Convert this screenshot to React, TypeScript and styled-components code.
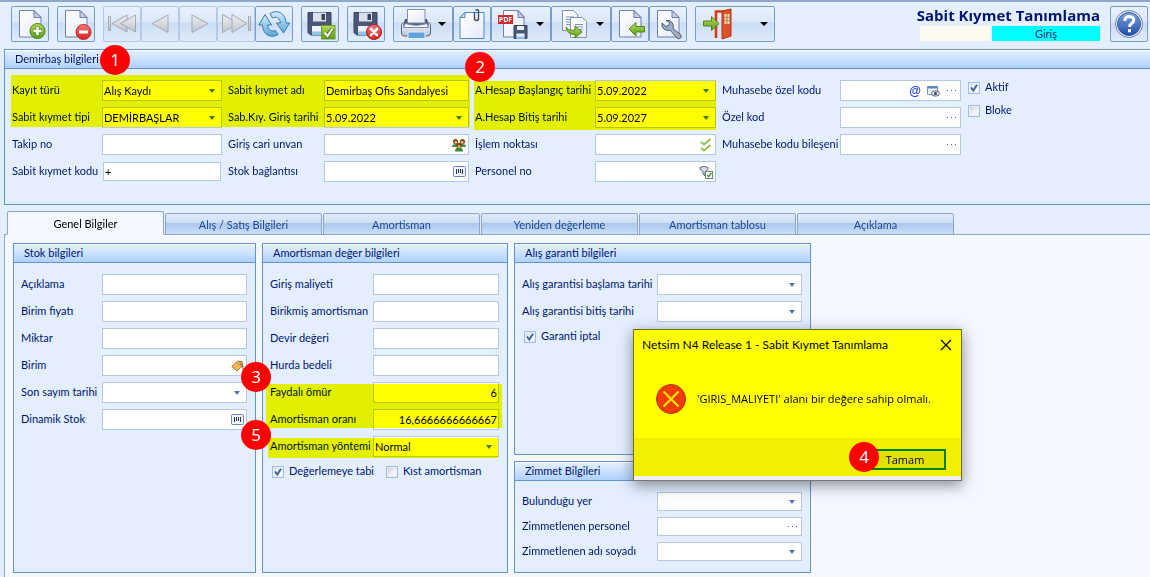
import React, { useId } from 'react';
import styled, { createGlobalStyle, css } from 'styled-components';

const c = {
  page: '#e3efff',
  tabPage: '#f3f7ff',
  line: '#6593cf',
  tabLine: '#8fa5cc',
  field: '#b3c8e3',
  text: '#00156e',
  mark: '#ffff00',
  red: '#ff0000',
};

const GlobalStyle = createGlobalStyle`
  * { box-sizing: border-box; }
  body { margin: 0; background: ${c.page}; overflow: hidden; }
  body, button, input, select { font-family: Lato, "Open Sans", sans-serif; font-size: 11px; line-height: 14px; }
`;

/* ---------- layout ---------- */

const Screen = styled.div`
  display: flex;
  flex-direction: column;
  min-height: 100vh;
  color: ${c.text};
  background: ${c.page};
`;

const Toolbar = styled.header`
  display: flex;
  align-items: flex-start;
  border-top: 2px solid #8fa8cb;
  padding: 4px 2px 7px 11px;
`;

const ToolGroup = styled.div`
  display: flex;
  margin-right: 8px;
`;

const ToolButton = styled.button<{ $wide?: number }>`
  display: flex;
  align-items: center;
  justify-content: ${(p) => (p.$wide ? 'space-between' : 'center')};
  width: ${(p) => p.$wide ?? 38}px;
  height: 36px;
  padding: 0 ${(p) => (p.$wide ? 6 : 0)}px;
  border: 1px solid #7b9ccb;
  border-radius: 2px;
  background: linear-gradient(#e8f1fd 0%, #dbe8fa 45%, #cadcf4 46%, #dfebfb 100%);
  &:disabled { border-color: #b4c9e6; }
`;

const TitleBlock = styled.div`
  display: flex;
  flex-direction: column;
  margin-left: auto;
  margin-right: 10px;
`;

const Title = styled.h1`
  margin: 0 0 2px;
  font: 700 15px/18px "Open Sans", sans-serif;
  text-align: right;
`;

const ModeBar = styled.div`
  display: grid;
  grid-template-columns: 70px 108px;
  gap: 2px;
  justify-content: end;
  text-align: center;
  color: #003060;
  line-height: 15px;
`;

const ModeCell = styled.span<{ $color: string }>`
  background: ${(p) => p.$color};
`;

const HeadPanel = styled.div`
  position: relative;
  & > section { margin-left: 4px; }
`;

const Group = styled.section<{ $open?: boolean }>`
  position: relative;
  min-width: 0;
  border: 1px solid ${c.line};
  ${(p) => p.$open && 'border-right: 0;'}
  background: ${c.page};
`;

const GroupTitle = styled.h2`
  margin: 0;
  padding: 1px 10px;
  height: 19px;
  border-bottom: 1px solid ${c.line};
  border-top: 1px solid #fff;
  font-size: 11px;
  line-height: 14px;
  font-weight: 400;
  background: linear-gradient(#e3efff, #afd2ff);
`;

const HeadForm = styled.div`
  display: flex;
  align-items: flex-start;
  gap: 6px;
  padding: 11px 7px 22px;
`;

const Fields = styled.div<{ $label: number; $field: number }>`
  display: grid;
  flex: none;
  grid-template-columns: ${(p) => p.$label}px ${(p) => p.$field}px;
  row-gap: 6px;
  align-items: center;
`;

const Columns = styled.div`
  display: grid;
  grid-template-columns: 243px 246px 297px;
  gap: 6px;
  align-items: stretch;
  padding: 8px;
`;

const Stack = styled.div`
  display: flex;
  flex-direction: column;
  gap: 6px;
`;

const GroupBody = styled.div`
  padding: 11px 7px;
`;

const TallGroup = styled(Group)`
  min-height: 330px;
`;

const WarrantyGroup = styled(Group)`
  min-height: 212px;
`;

const CustodyGroup = styled(Group)`
  flex: 1;
`;

/* ---------- fields ---------- */

const Label = styled.label`
  padding-bottom: 2px;
  white-space: nowrap;
`;

const Box = styled.div<{ $small?: boolean; $inset?: boolean }>`
  display: flex;
  align-items: center;
  height: ${(p) => (p.$small || p.$inset ? 19 : 21)}px;
  ${(p) => p.$inset && 'margin: 1px;'}
  border: 1px solid ${c.field};
  background: #fff;
`;

const control = css`
  flex: 1;
  min-width: 0;
  width: 100%;
  height: 100%;
  border: 0;
  padding: 0 1px;
  outline: 0;
  background: transparent;
  color: #000;
`;

const Input = styled.input<{ $right?: boolean }>`
  ${control}
  text-align: ${(p) => (p.$right ? 'right' : 'left')};
`;

const Select = styled.select`
  ${control}
  appearance: none;
`;

const CellButton = styled.button`
  display: flex;
  align-items: center;
  justify-content: center;
  flex: none;
  width: 18px;
  height: 17px;
  padding: 0;
  border: 0;
  background: transparent;
`;

const ArrowCell = styled.span`
  display: flex;
  align-items: center;
  justify-content: center;
  flex: none;
  width: 18px;
  pointer-events: none;
`;

const CheckRow = styled.div`
  display: flex;
  gap: 12px;
  padding: 7px 0 0 2px;
`;

const CheckColumn = styled.div`
  display: flex;
  flex-direction: column;
  gap: 9px;
  padding-left: 1px;
`;

const CheckLabel = styled.label`
  display: flex;
  align-items: center;
  gap: 5px;
  height: 14px;
  white-space: nowrap;
`;

const CheckInput = styled.input`
  appearance: none;
  flex: none;
  width: 12px;
  height: 12px;
  margin: 2px 0 0;
  border: 1px solid #a3bedf;
  background: linear-gradient(135deg, #cfd3da, #fbfbfc 80%) content-box #fff;
  padding: 1px;
  &:checked {
    background:
      url("data:image/svg+xml,%3Csvg xmlns='http://www.w3.org/2000/svg' viewBox='0 0 10 10'%3E%3Cpath d='M2 4.5l2.3 3L8 1.8' fill='none' stroke='%23416496' stroke-width='1.9'/%3E%3C/svg%3E") center / 10px 10px no-repeat,
      linear-gradient(135deg, #d5dbe5, #fbfbfc 80%) content-box #fff;
  }
`;

/* ---------- tabs ---------- */

const TabBar = styled.div`
  display: flex;
  align-items: flex-end;
  gap: 1px;
  margin: 6px 0 -1px 7px;
  position: relative;
`;

const Tab = styled.button<{ $active?: boolean }>`
  width: 157px;
  height: ${(p) => (p.$active ? 24 : 22)}px;
  padding: 2px 0 0;
  border: 1px solid ${c.tabLine};
  border-radius: 2px 2px 0 0;
  color: #1f4690;
  background: linear-gradient(#dfebfa 0%, #cfe0f6 42%, #acc8ec 48%, #c9dff9 100%);
  ${(p) => p.$active && `color: #000; background: ${c.tabPage}; border-bottom-color: ${c.tabPage};`}
`;

const TabPage = styled.section`
  flex: 1;
  margin-left: 4px;
  border: solid ${c.tabLine};
  border-width: 1px 0 0 1px;
  background: ${c.tabPage};
`;

/* ---------- annotations over the form ---------- */

type Rect = { $x: number; $y: number; $w: number; $h: number };

const Marker = styled.div<Rect>`
  position: absolute;
  left: ${(p) => p.$x}px;
  top: ${(p) => p.$y}px;
  width: ${(p) => p.$w}px;
  height: ${(p) => p.$h}px;
  background: ${c.mark};
  mix-blend-mode: multiply;
  pointer-events: none;
`;

const Bubble = styled.span<{ $x: number; $y: number }>`
  position: absolute;
  left: ${(p) => p.$x}px;
  top: ${(p) => p.$y}px;
  width: 30px;
  height: 30px;
  border-radius: 50%;
  background: ${c.red};
  color: #fff;
  font: 17px/30px "Noto Sans", sans-serif;
  text-align: center;
  z-index: 2;
`;

/* ---------- message box ---------- */

const Dialog = styled.div`
  position: absolute;
  left: 633px;
  top: 329px;
  width: 329px;
  border: 1px solid #6f6f10;
  border-bottom-color: #777;
  background: #f0f0f0;
  box-shadow: 0 4px 14px rgba(0, 0, 0, 0.45);
  color: #000;
  z-index: 3;
`;

const DialogHead = styled.div`
  display: flex;
  align-items: center;
  justify-content: space-between;
  height: 30px;
  padding: 0 9px 0 8px;
  background: ${c.mark};
  font-size: 12px;
`;

const CloseButton = styled.button`
  display: flex;
  padding: 0;
  border: 0;
  background: transparent;
`;

const DialogBody = styled.div`
  display: flex;
  align-items: center;
  gap: 11px;
  height: 78px;
  padding: 0 22px;
  background: ${c.mark};
  font: 11px/16px "Open Sans", sans-serif;
  white-space: nowrap;
`;

const DialogFoot = styled.div`
  display: flex;
  justify-content: flex-end;
  height: 38px;
  padding: 11px 15px 0 0;
  margin-bottom: 4px;
  background: #f2f000;
`;

const OkButton = styled.button`
  width: 82px;
  height: 21px;
  padding: 0;
  border: 2px solid #007f00;
  background: #e1e100;
  color: #000;
  font: 11px/16px "Open Sans", sans-serif;
`;

/* ---------- icons ---------- */

const Svg = ({ s = 32, w, children }: { s?: number; w?: number; children: React.ReactNode }) => (
  <svg width={w ?? s} height={s} viewBox={`0 0 ${w ?? s} ${s}`} aria-hidden="true">{children}</svg>
);

const HiddenSvg = styled.svg`
  position: absolute;
  width: 0;
  height: 0;
`;

const Defs = () => (
  <HiddenSvg aria-hidden="true">
    <defs>
      <linearGradient id="paper" x1="0" y1="0" x2="1" y2="1"><stop offset="0" stopColor="#fff" /><stop offset="1" stopColor="#e4ebf8" /></linearGradient>
      <linearGradient id="green" x1="0" y1="0" x2="0" y2="1"><stop offset="0" stopColor="#b4dc58" /><stop offset="1" stopColor="#5c9c1a" /></linearGradient>
      <linearGradient id="redg" x1="0" y1="0" x2="0" y2="1"><stop offset="0" stopColor="#f47a78" /><stop offset="1" stopColor="#d42222" /></linearGradient>
      <linearGradient id="blue" x1="0" y1="0" x2="0" y2="1"><stop offset="0" stopColor="#d4effc" /><stop offset="1" stopColor="#5ba6d8" /></linearGradient>
      <linearGradient id="grey" x1="0" y1="0" x2="0" y2="1"><stop offset="0" stopColor="#eef0f2" /><stop offset="1" stopColor="#bfc5cc" /></linearGradient>
      <linearGradient id="help" x1="0" y1="0" x2="0" y2="1"><stop offset="0" stopColor="#7fa3dc" /><stop offset="1" stopColor="#1f4da8" /></linearGradient>
      <linearGradient id="printer" x1="0" y1="0" x2="0" y2="1"><stop offset="0" stopColor="#fbfcff" /><stop offset="1" stopColor="#b9c0d8" /></linearGradient>
    </defs>
  </HiddenSvg>
);

const Paper = () => (
  <>
    <path d="M5.5 2.500h14.500l7 7v19.500h-21.500z" fill="url(#paper)" stroke="#6f7fae" />
    <path d="M20 2.500v7h7z" fill="#c3cfe6" stroke="#6f7fae" strokeLinejoin="round" />
  </>
);

const IconNew = () => (
  <Svg>
    <Paper />
    <circle cx="23.5" cy="23" r="7.5" fill="url(#green)" stroke="#4a7f14" />
    <path d="M23.500 18.500v9M19 23h9" stroke="#5a8f1f" strokeWidth="4.5" />
    <path d="M23.500 19v8M19.500 23h8" stroke="#fff" strokeWidth="2.6" />
  </Svg>
);

const IconDelete = () => (
  <Svg>
    <Paper />
    <circle cx="23.5" cy="24" r="7.5" fill="url(#redg)" stroke="#bb2222" />
    <path d="M19 24h9" stroke="#fff" strokeWidth="3" />
  </Svg>
);

const navShape = { fill: 'url(#grey)', stroke: '#a3a9b2' };
const IconFirst = () => (
  <Svg><path d="M2.500 8.500h2v14h-2z" {...navShape} /><path d="M21 7v17l-15-8.500z" {...navShape} /><path d="M29.500 7v17l-15-8.500z" {...navShape} /></Svg>
);
const IconPrev = () => <Svg><path d="M24 7v17.500l-16-9z" {...navShape} /></Svg>;
const IconNext = () => <Svg><path d="M10 7v17.500l16-9z" {...navShape} /></Svg>;
const IconLast = () => (
  <Svg><path d="M2.500 6.500v18l16-9z" {...navShape} /><path d="M12 6.500v18l15-9z" {...navShape} /><path d="M28.500 8.500h2v14h-2z" {...navShape} /></Svg>
);

const IconRefresh = () => (
  <Svg>
    <path d="M12 5.500C21 .500 28 7 28 15H31.500L25.500 25 18.500 15H22.500C22 10 18 8 14.500 10z" fill="url(#blue)" stroke="#3f78aa" strokeLinejoin="round" />
    <path d="M20 26.500C11 31.500 4.500 25 4.500 17H.8L7 6.500 13.500 17H9.500C10 22 14 24 17.500 22.500z" fill="url(#blue)" stroke="#3f78aa" strokeLinejoin="round" />
  </Svg>
);

const Floppy = () => (
  <>
    <path d="M4 4.500h23v22.500h-20.500l-2.500-2.500z" fill="#4a5875" stroke="#39445c" />
    <path d="M9 4.500h13v9h-13z" fill="#dbe1ea" />
    <path d="M17.500 6h3.500v6h-3.500z" fill="#39445c" />
    <path d="M8 18h15v9h-15z" fill="#eef4fb" />
    <path d="M8 23.500h15v3.500h-15z" fill="#8ec5ec" />
  </>
);

const IconSave = () => (
  <Svg>
    <Floppy />
    <rect x="17.5" y="17.5" width="13.5" height="13.5" fill="url(#green)" stroke="#6c9a24" />
    <path d="M20.500 24.500l3 3.500 5-7.500" fill="none" stroke="#4c7a17" strokeWidth="4" />
    <path d="M20.500 24.500l3 3.500 5-7.500" fill="none" stroke="#fff" strokeWidth="2" />
  </Svg>
);

const IconCancel = () => (
  <Svg>
    <Floppy />
    <circle cx="24" cy="24" r="7.5" fill="url(#redg)" stroke="#a81c1c" />
    <path d="M21 21l6 6M27 21l-6 6" stroke="#fff" strokeWidth="2.6" strokeLinecap="round" />
  </Svg>
);

const IconPrint = () => (
  <Svg>
    <rect x="1.5" y="14.5" width="29" height="13.5" rx="3" fill="url(#printer)" stroke="#59627f" />
    <path d="M5 11h22l2 7q-13 4-26 0z" fill="#4a5370" />
    <path d="M7.500 1.500h17.500v13.500h-17.500z" fill="url(#paper)" stroke="#8490b0" />
    <path d="M5 15.500q11.500 3.500 22 0l1.500 4h-25z" fill="#f7f9fe" stroke="#7c86a6" />
    <path d="M8 24h17v6.500h-17z" fill="#5fa4de" stroke="#e9eef8" />
  </Svg>
);

const IconClip = () => (
  <Svg>
    <path d="M9 4.500h19v26h-24v-21z" fill="url(#paper)" stroke="#4f8ac0" />
    <path d="M9 4.500v5h-5z" fill="#cfe3f5" stroke="#4f8ac0" />
    <path d="M18.500 4v7.500q2 2 4 0v-9q-1.500-1.800-3 0" fill="none" stroke="#3d4a62" strokeWidth="1.4" />
  </Svg>
);

const IconWrap = styled.span`
  position: relative;
  display: flex;
`;

const PdfTag = styled.span`
  position: absolute;
  left: 0;
  top: 7px;
  width: 15px;
  height: 9px;
  background: #cf2a30;
  color: #fff;
  font: 700 7px/9px "Open Sans", sans-serif;
`;

const IconPdf = () => (
  <IconWrap>
    <Svg>
      <path d="M5.500 2.500h14.500l6 6v20.500h-20.500z" fill="url(#paper)" stroke="#6f7fae" />
      <path d="M20 2.500v7h6z" fill="#c3cfe6" stroke="#6f7fae" />
      <path d="M16 17.500h13v13h-13z" fill="#4a5875" stroke="#39445c" />
      <path d="M19 18h7v4h-7zM18.500 25.500h8v5h-8z" fill="#e4edf8" />
      <path d="M18.500 28.500h8v2h-8z" fill="#8ec5ec" />
    </Svg>
    <PdfTag>PDF</PdfTag>
  </IconWrap>
);

const IconCopy = () => (
  <Svg>
    <path d="M4.500 2.500h11l4 4v16h-15z" fill="url(#paper)" stroke="#8391b8" />
    <path d="M8 9h8M8 11.500h8M8 14h8M8 16.500h8" stroke="#7d93bb" />
    <path d="M12.500 9.500h12l4 4v16h-16z" fill="url(#paper)" stroke="#8391b8" />
    <path d="M17 16.500h8M17 19h8M17 21.500h8" stroke="#7d93bb" />
    <path d="M8 19q3 4.500 9 3v-4l7 6-7 6v-3.500q-8 0-9-7.500z" fill="url(#green)" stroke="#4f861a" />
  </Svg>
);

const IconImport = () => (
  <Svg>
    <Paper />
    <path d="M15 21l7-6.500v4h8.500v5.500h-8.500v4z" fill="url(#green)" stroke="#4f861a" />
  </Svg>
);

const IconTools = () => (
  <Svg>
    <Paper />
    <path d="M14 12.500a6 6 0 0 1 7 8l7.500 6q2 3-.5 4-2 .8-3.500-1l-6.500-7.500a6 6 0 0 1-8-7l4 3.500 3-1.200.5-3z" fill="#9fb0c6" stroke="#4a5a75" />
  </Svg>
);

const IconExit = () => (
  <Svg s={32} w={30}>
    <path d="M14 30v-26.500h14" fill="none" stroke="#d23c1a" strokeWidth="2.6" />
    <path d="M20 3l9-2v27l-9 3z" fill="#dd5028" stroke="#b03412" />
    <path d="M22.500 6h5v10h-5z" fill="#f5e0b8" />
    <path d="M25 6v10M22.500 9.300h5M22.500 12.600h5" stroke="#b08048" />
    <path d="M1.500 13h8v-4.500l7.500 7-7.500 7v-4.500h-8z" fill="url(#green)" stroke="#4f861a" />
  </Svg>
);

const IconHelp = () => (
  <Svg>
    <circle cx="16" cy="16" r="13.5" fill="#eef3fb" stroke="#6b7fa8" />
    <circle cx="16" cy="16" r="11.5" fill="url(#help)" stroke="#3a5da5" />
    <path d="M11.800 13q.2-4.500 4.500-4.500 4.500.2 4.400 4-.2 2-2.700 3.400-1.500 1-1.500 3M16.500 21.200v3" fill="none" stroke="#fff" strokeWidth="3" />
  </Svg>
);

const Caret = () => <Svg s={6} w={8}><path d="M0 1h8L4 5z" fill="#000" /></Svg>;
const SmallArrow = () => <Svg s={4} w={6}><path d="M0 0h6L3 4z" fill="#4a74ae" /></Svg>;

const IconDots = () => (
  <Svg s={3} w={9}><path d="M0 1h1v1h-1zM4 1h1v1h-1zM8 1h1v1h-1z" fill="#4a6fa8" /></Svg>
);

const IconPeople = () => (
  <Svg s={14}>
    <path d="M0 9q0-3 3.500-3T7 9zM7 9q0-3 3.500-3T14 9z" fill="#4c8a3c" />
    <circle cx="3.5" cy="3.5" r="2.6" fill="#8a4d1c" /><circle cx="10.5" cy="3.5" r="2.6" fill="#8a4d1c" />
    <circle cx="3.8" cy="4.3" r="1.4" fill="#e6b27a" /><circle cx="10.2" cy="4.3" r="1.4" fill="#e6b27a" />
    <path d="M3 13.500q0-4 4-4t4 4z" fill="#3f8a34" />
    <circle cx="7" cy="7.5" r="2.8" fill="#7b4216" /><circle cx="7" cy="8.4" r="1.5" fill="#e6b27a" />
  </Svg>
);

const IconBarcode = () => (
  <Svg s={11} w={13}>
    <rect x=".5" y=".5" width="12" height="10" rx="1" fill="#f1f4fc" stroke="#6f84bd" />
    <path d="M3.500 3v5M5.500 3v4M7.500 3v4M9.500 3v5" stroke="#27324f" />
  </Svg>
);

const IconChecks = () => (
  <Svg s={14} w={12}><path d="M1 4l3 2.500L10.500 1M1 10l3 2.500L10.500 7" fill="none" stroke="#93c04a" strokeWidth="1.8" /></Svg>
);

const IconFilter = () => (
  <Svg s={14}>
    <path d="M1 2.500q4-2.500 8 0v2l-3 2.500v4l-2-2v-2.500l-3-2.500z" fill="#d5dae2" stroke="#5f6b80" />
    <rect x="6.5" y="6.5" width="7" height="7" fill="#fff" stroke="#6f7f9a" />
    <path d="M8 10l1.600 1.700L12.500 8" fill="none" stroke="#4f9a1a" strokeWidth="1.5" />
  </Svg>
);

const IconView = () => (
  <Svg s={12} w={13}>
    <path d="M.5 1.500h10v8h-10z" fill="#f4f7fc" stroke="#7a94bf" />
    <path d="M.5 1h10v2.500h-10z" fill="#5a86c4" />
    <ellipse cx="8.5" cy="8.5" rx="4" ry="2.6" fill="#e8ebf2" stroke="#556079" />
    <circle cx="8.5" cy="8.5" r="1.5" fill="#39445c" />
  </Svg>
);

const IconTag = () => (
  <Svg s={12} w={13}>
    <path d="M.8 6.500L6.500 1.200l4.500.3.8 4L6 11z" fill="#f3b757" stroke="#b06f22" />
    <circle cx="9" cy="3.8" r="1.1" fill="#fff" stroke="#8b5a1d" strokeWidth=".7" />
    <path d="M9.500 4q3 1 2.500 5.500" fill="none" stroke="#55504a" />
  </Svg>
);

const AtSign = styled.span`
  color: #2038e0;
  font: 700 12px/14px "Liberation Sans", sans-serif;
`;

const IconError = () => (
  <Svg s={30}>
    <circle cx="15" cy="15" r="14.5" fill="#f23c00" stroke="#a83200" />
    <path d="M7.500 7.500l15 15M22.500 7.500l-15 15" stroke="#ffe600" strokeWidth="2.2" />
  </Svg>
);

/* ---------- field components ---------- */

type FieldProps = {
  label: string;
  value?: string;
  right?: boolean;
  small?: boolean;
  inset?: boolean;
  kind?: 'text' | 'select' | 'date';
  actions?: { name: string; icon: React.ReactNode }[];
};

const Field = ({ label, value = '', right, small, inset, kind = 'text', actions = [] }: FieldProps) => {
  const id = useId();
  return (
    <>
      <Label htmlFor={id}>{label}</Label>
      <Box $small={small} $inset={inset}>
        {kind === 'select' ? (
          <Select id={id} defaultValue={value}><option>{value}</option></Select>
        ) : (
          <Input id={id} defaultValue={value} $right={right} />
        )}
        {kind === 'select' && <ArrowCell><SmallArrow /></ArrowCell>}
        {kind === 'date' && <CellButton aria-label={`${label} seç`}><SmallArrow /></CellButton>}
        {actions.map((a) => <CellButton key={a.name} aria-label={a.name}>{a.icon}</CellButton>)}
      </Box>
    </>
  );
};

const Check = ({ label, on }: { label: string; on?: boolean }) => (
  <CheckLabel><CheckInput type="checkbox" defaultChecked={on} />{label}</CheckLabel>
);

const dots = { name: 'Seç', icon: <IconDots /> };

const Tool = ({ name, icon, wide, off }: { name: string; icon: React.ReactNode; wide?: number; off?: boolean }) => (
  <ToolButton aria-label={name} $wide={wide} disabled={off}>{icon}{wide && <Caret />}</ToolButton>
);

const tabs = ['Genel Bilgiler', 'Alış / Satış Bilgileri', 'Amortisman', 'Yeniden değerleme', 'Amortisman tablosu', 'Açıklama'];

export default function App() {
  return (
    <Screen>
      <GlobalStyle />
      <Defs />
      <Toolbar>
        <ToolGroup><Tool name="Yeni" icon={<IconNew />} /></ToolGroup>
        <ToolGroup><Tool name="Sil" icon={<IconDelete />} /></ToolGroup>
        <ToolGroup>
          <Tool name="İlk" icon={<IconFirst />} off />
          <Tool name="Önceki" icon={<IconPrev />} off />
          <Tool name="Sonraki" icon={<IconNext />} off />
          <Tool name="Son" icon={<IconLast />} off />
          <Tool name="Yenile" icon={<IconRefresh />} />
        </ToolGroup>
        <ToolGroup><Tool name="Kaydet" icon={<IconSave />} /></ToolGroup>
        <ToolGroup><Tool name="Vazgeç" icon={<IconCancel />} /></ToolGroup>
        <ToolGroup>
          <Tool name="Yazdır" icon={<IconPrint />} wide={60} />
          <Tool name="Ekler" icon={<IconClip />} />
          <Tool name="PDF kaydet" icon={<IconPdf />} wide={60} />
          <Tool name="Kopyala" icon={<IconCopy />} wide={60} />
          <Tool name="İçe aktar" icon={<IconImport />} />
          <Tool name="Ayarlar" icon={<IconTools />} />
        </ToolGroup>
        <ToolGroup><Tool name="Çıkış" icon={<IconExit />} wide={80} /></ToolGroup>
        <TitleBlock>
          <Title>Sabit Kıymet Tanımlama</Title>
          <ModeBar><ModeCell $color="#fffaf0" /><ModeCell $color="#00ffff">Giriş</ModeCell></ModeBar>
        </TitleBlock>
        <Tool name="Yardım" icon={<IconHelp />} />
      </Toolbar>

      <HeadPanel>
        <Group $open>
          <GroupTitle>Demirbaş bilgileri</GroupTitle>
          <HeadForm>
            <Fields $label={90} $field={120}>
              <Field label="Kayıt türü" value="Alış Kaydı" kind="select" />
              <Field label="Sabit kıymet tipi" value="DEMİRBAŞLAR" kind="select" />
              <Field label="Takip no" />
              <Field label="Sabit kıymet kodu" value="+" inset />
            </Fields>
            <Fields $label={96} $field={145}>
              <Field label="Sabit kıymet adı" value="Demirbaş Ofis Sandalyesi" />
              <Field label="Sab.Kıy. Giriş tarihi" value="5.09.2022" kind="date" />
              <Field label="Giriş cari unvan" actions={[{ name: 'Cari seç', icon: <IconPeople /> }]} />
              <Field label="Stok bağlantısı" actions={[{ name: 'Stok seç', icon: <IconBarcode /> }]} />
            </Fields>
            <Fields $label={120} $field={121}>
              <Field label="A.Hesap Başlangıç tarihi" value="5.09.2022" kind="date" />
              <Field label="A.Hesap Bitiş tarihi" value="5.09.2027" kind="date" />
              <Field label="İşlem noktası" actions={[{ name: 'Nokta seç', icon: <IconChecks /> }]} />
              <Field label="Personel no" actions={[{ name: 'Personel seç', icon: <IconFilter /> }]} />
            </Fields>
            <Fields $label={118} $field={121}>
              <Field
                label="Muhasebe özel kodu"
                actions={[{ name: 'E-posta', icon: <AtSign>@</AtSign> }, { name: 'Göster', icon: <IconView /> }, dots]}
              />
              <Field label="Özel kod" actions={[dots]} />
              <Field label="Muhasebe kodu bileşeni" actions={[dots]} />
            </Fields>
            <CheckColumn>
              <Check label="Aktif" on />
              <Check label="Bloke" />
            </CheckColumn>
          </HeadForm>
        </Group>
        <Marker $x={11} $y={26} $w={459} $h={52} />
        <Marker $x={474} $y={32} $w={242} $h={49} />
        <Bubble $x={100} $y={-4}>1</Bubble>
        <Bubble $x={465} $y={3}>2</Bubble>
      </HeadPanel>

      <TabBar role="tablist">
        {tabs.map((t, i) => <Tab key={t} role="tab" aria-selected={i === 0} $active={i === 0}>{t}</Tab>)}
      </TabBar>
      <TabPage role="tabpanel">
        <Columns>
          <TallGroup>
            <GroupTitle>Stok bilgileri</GroupTitle>
            <GroupBody>
              <Fields $label={81} $field={145}>
                <Field label="Açıklama" />
                <Field label="Birim fiyatı" />
                <Field label="Miktar" />
                <Field label="Birim" actions={[{ name: 'Birim seç', icon: <IconTag /> }]} />
                <Field label="Son sayım tarihi" kind="date" />
                <Field label="Dinamik Stok" actions={[{ name: 'Stok seç', icon: <IconBarcode /> }]} />
              </Fields>
            </GroupBody>
          </TallGroup>

          <TallGroup>
            <GroupTitle>Amortisman değer bilgileri</GroupTitle>
            <GroupBody>
              <Fields $label={103} $field={126}>
                <Field label="Giriş maliyeti" />
                <Field label="Birikmiş amortisman" />
                <Field label="Devir değeri" />
                <Field label="Hurda bedeli" />
                <Field label="Faydalı ömür" value="6" right />
                <Field label="Amortisman oranı" value="16,6666666666667" right />
                <Field label="Amortisman yöntemi" value="Normal" kind="select" />
              </Fields>
              <CheckRow>
                <Check label="Değerlemeye tabi" on />
                <Check label="Kıst amortisman" />
              </CheckRow>
            </GroupBody>
            <Marker $x={3} $y={140} $w={236} $h={44} />
            <Marker $x={5} $y={194} $w={230} $h={20} />
            <Bubble $x={-22} $y={118}>3</Bubble>
            <Bubble $x={-22} $y={176}>5</Bubble>
          </TallGroup>

          <Stack>
            <WarrantyGroup>
              <GroupTitle>Alış garanti bilgileri</GroupTitle>
              <GroupBody>
                <Fields $label={135} $field={145}>
                  <Field label="Alış garantisi başlama tarihi" kind="date" />
                  <Field label="Alış garantisi bitiş tarihi" kind="date" />
                </Fields>
                <CheckRow><Check label="Garanti iptal" on /></CheckRow>
              </GroupBody>
            </WarrantyGroup>
            <CustodyGroup>
              <GroupTitle>Zimmet Bilgileri</GroupTitle>
              <GroupBody>
                <Fields $label={135} $field={145}>
                  <Field label="Bulunduğu yer" kind="date" small />
                  <Field label="Zimmetlenen personel" actions={[dots]} small />
                  <Field label="Zimmetlenen adı soyadı" kind="date" small />
                </Fields>
              </GroupBody>
            </CustodyGroup>
          </Stack>
        </Columns>
      </TabPage>

      <Dialog role="dialog" aria-labelledby="msg-title">
        <DialogHead>
          <span id="msg-title">Netsim N4 Release 1 - Sabit Kıymet Tanımlama</span>
          <CloseButton aria-label="Kapat">
            <Svg s={12}><path d="M1 1l10 10M11 1L1 11" stroke="#000" strokeWidth="1.2" /></Svg>
          </CloseButton>
        </DialogHead>
        <DialogBody><IconError />'GIRIS_MALIYETI' alanı bir değere sahip olmalı.</DialogBody>
        <DialogFoot><OkButton>Tamam</OkButton></DialogFoot>
        <Bubble $x={215} $y={112}>4</Bubble>
      </Dialog>
    </Screen>
  );
}
